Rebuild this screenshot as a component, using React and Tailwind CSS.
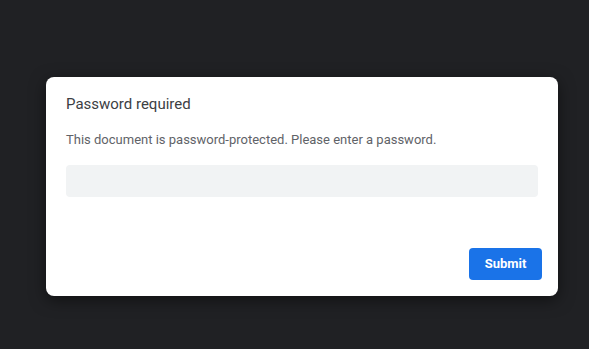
import React from "react";

export default function App() {
  return (
    <div
      className="min-h-[349px] w-full bg-[#202124] pl-[46px] pt-[77px]"
      style={{ fontFamily: "Roboto, 'Liberation Sans', sans-serif" }}
    >
      {/* Password dialog */}
      <div className="flex h-[219px] w-[512px] flex-col rounded-lg bg-white shadow-[0_4px_16px_rgba(0,0,0,0.5)]">
        <div className="px-5 pt-[17px]">
          <h2 className="text-[15px] leading-5 text-[#3c4043]">Password required</h2>
          <p className="mt-[16px] text-[13px] leading-5 text-[#5f6368]">
            This document is password-protected. Please enter a password.
          </p>
          <input
            type="password"
            className="mt-[15px] h-8 w-full rounded bg-[#f1f3f4] px-2 text-sm outline-none"
          />
        </div>
        <div className="mt-auto flex justify-end px-4 pb-4">
          <button className="h-8 w-[73px] rounded bg-[#1a73e8] text-[13px] font-bold text-white">
            Submit
          </button>
        </div>
      </div>
    </div>
  );
}
